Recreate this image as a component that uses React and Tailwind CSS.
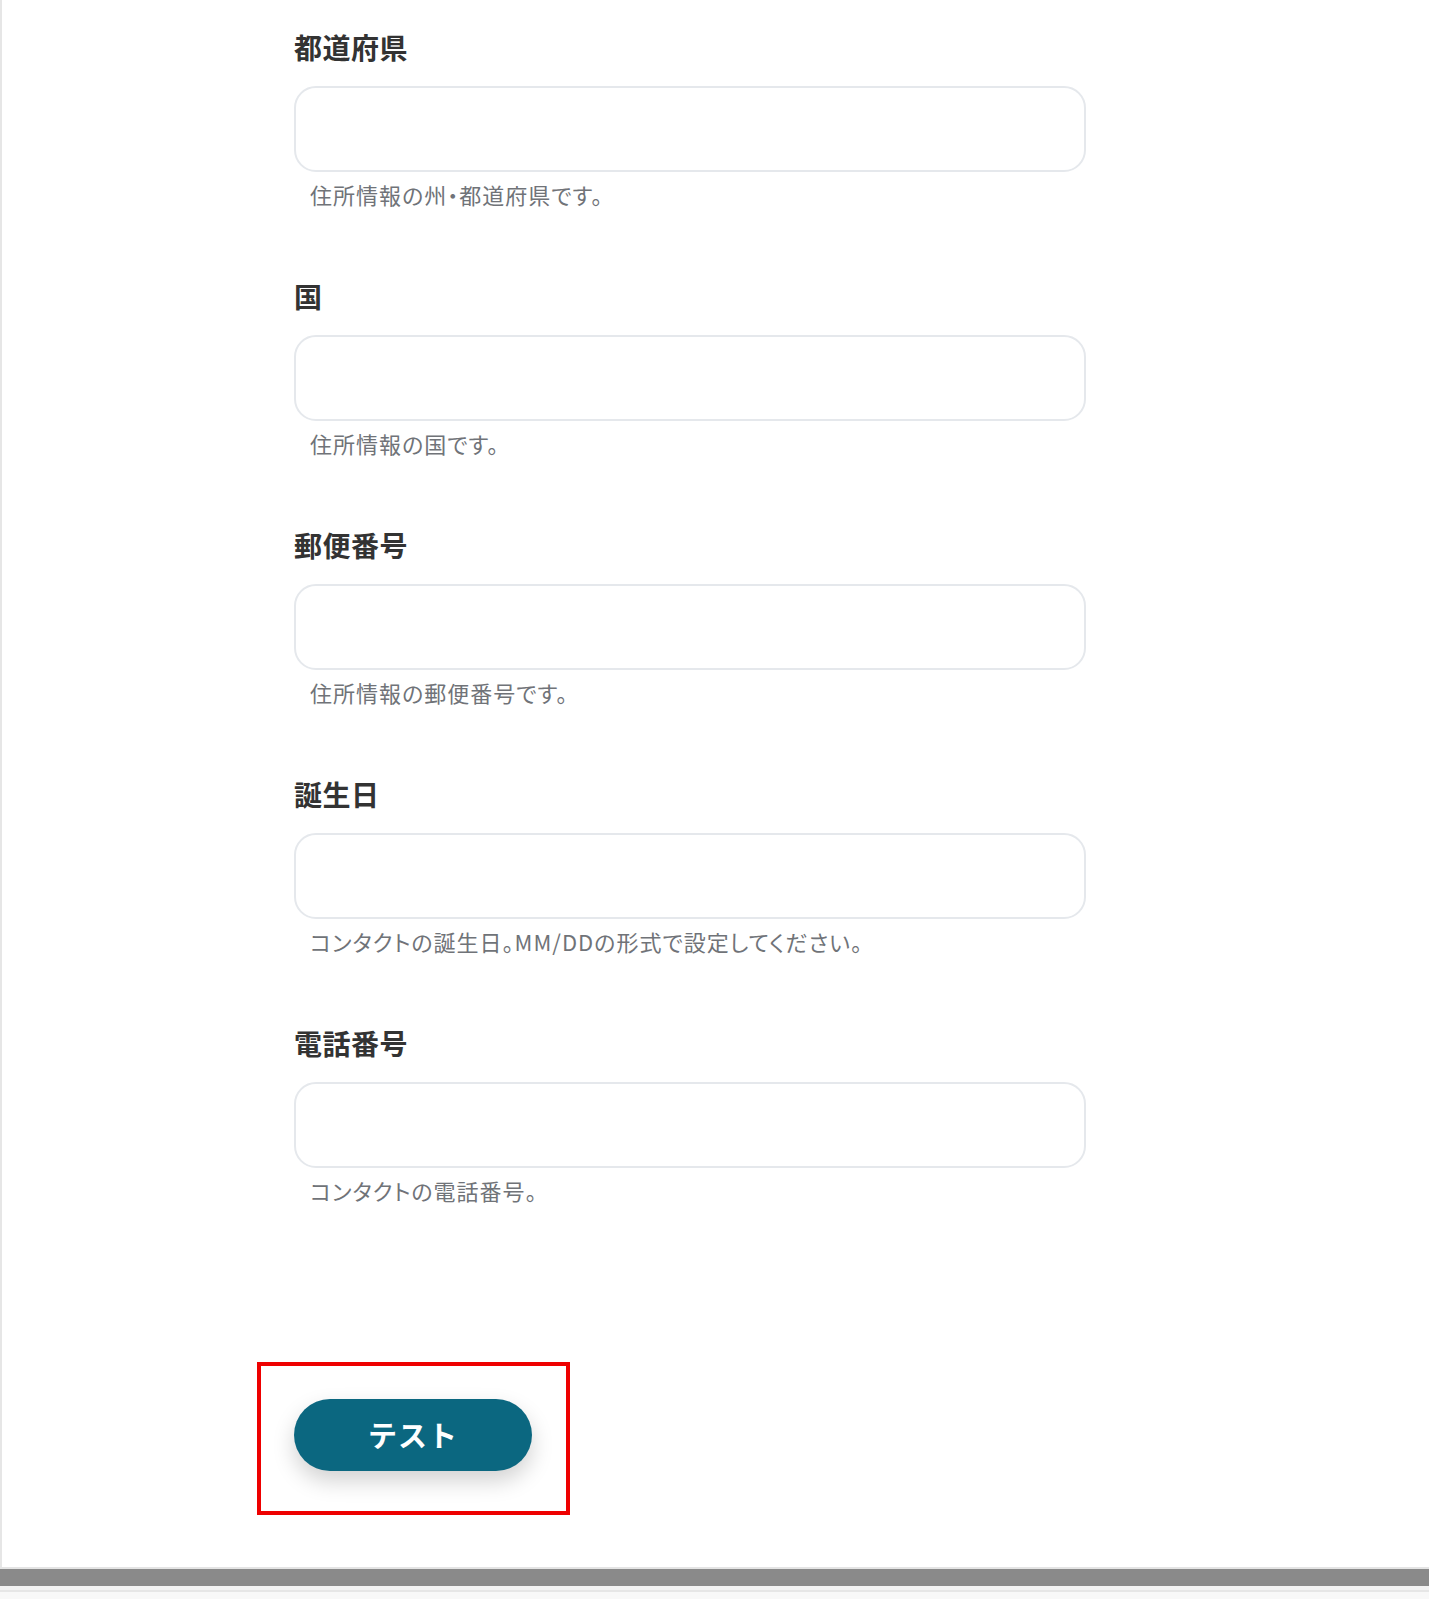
import React from 'react';

const FIELDS = [
  { label: '都道府県', help: '住所情報の州・都道府県です。' },
  { label: '国', help: '住所情報の国です。' },
  { label: '郵便番号', help: '住所情報の郵便番号です。' },
  { label: '誕生日', help: 'コンタクトの誕生日。MM/DDの形式で設定してください。' },
  { label: '電話番号', help: 'コンタクトの電話番号。' },
];

function Field({ label, help }) {
  return (
    <div className="flex flex-col">
      <label className="h-[40px] text-[28px] leading-[40px] font-bold tracking-[0.5px] text-[#333333]">
        {label}
      </label>
      <input
        type="text"
        className="mt-[19px] h-[86px] w-[792px] rounded-[22px] border-2 border-[#e5e8ec] bg-white px-5 outline-none"
      />
      <p className="mt-[7px] pl-[16px] text-[22px] leading-[30px] tracking-[1px] text-[#707378] [font-feature-settings:'palt']">
        {help}
      </p>
    </div>
  );
}

export default function App() {
  return (
    <div className="w-[1429px] bg-white" style={{ fontFamily: '"Noto Sans CJK JP", "Noto Sans", sans-serif' }}>
      <div className="border-l-2 border-[#e6e6e6] pl-[292px] pt-[27px] pb-[52px]">
        <div className="flex flex-col gap-[67px]">
          {FIELDS.map((f) => (
            <Field key={f.label} {...f} />
          ))}
        </div>

        {/* highlighted action */}
        <div className="mt-[157px] -ml-[37px] w-[313px] border-4 border-[#ee0000] pt-[33px] pb-[40px] pl-[33px] pr-[34px]">
          <button className="h-[72px] w-[238px] rounded-full bg-[#0b6780] text-[29px] font-bold tracking-[1px] text-white shadow-[0_10px_22px_rgba(0,0,0,0.18)]">
            テスト
          </button>
        </div>
      </div>

      <div className="h-[2px] bg-[#e4e4e4]" />
      <div className="h-[17px] bg-[#8a8a8a]" />
      <div className="h-[4px] bg-[#f3f3f3]" />
      <div className="h-[2px] bg-[#e6e6e6]" />
      <div className="h-[7px] bg-[#f8f8f8]" />
    </div>
  );
}
